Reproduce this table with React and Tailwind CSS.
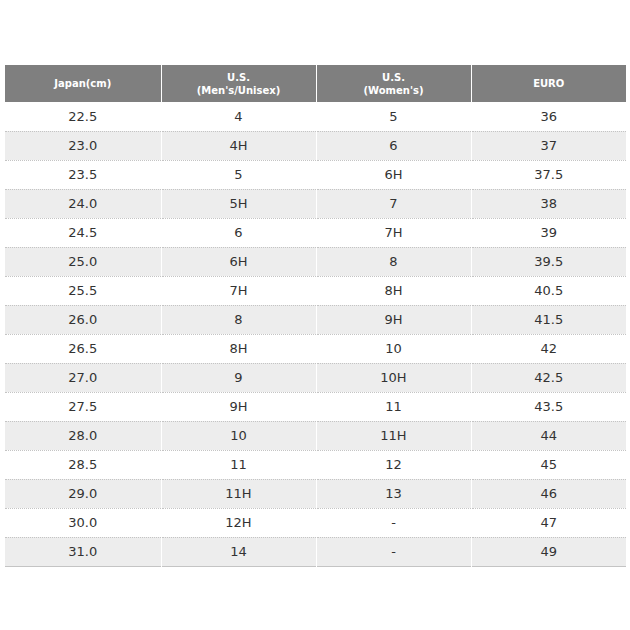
const rows = [
  ["22.5", "4", "5", "36"],
  ["23.0", "4H", "6", "37"],
  ["23.5", "5", "6H", "37.5"],
  ["24.0", "5H", "7", "38"],
  ["24.5", "6", "7H", "39"],
  ["25.0", "6H", "8", "39.5"],
  ["25.5", "7H", "8H", "40.5"],
  ["26.0", "8", "9H", "41.5"],
  ["26.5", "8H", "10", "42"],
  ["27.0", "9", "10H", "42.5"],
  ["27.5", "9H", "11", "43.5"],
  ["28.0", "10", "11H", "44"],
  ["28.5", "11", "12", "45"],
  ["29.0", "11H", "13", "46"],
  ["30.0", "12H", "-", "47"],
  ["31.0", "14", "-", "49"],
];

const headers = [
  ["Japan(cm)"],
  ["U.S.", "(Men's/Unisex)"],
  ["U.S.", "(Women's)"],
  ["EURO"],
];

export default function App() {
  return (
    <div className="min-h-[630px] w-[630px] bg-white pl-[5px] pt-[65px] font-['DejaVu_Sans',sans-serif]">
      <table className="w-[621px] table-fixed border-collapse">
        <colgroup>
          <col className="w-[156px]" />
          <col className="w-[155px]" />
          <col className="w-[155px]" />
          <col className="w-[155px]" />
        </colgroup>
        <thead>
          <tr className="h-[37px] bg-[#7f7f7f]">
            {headers.map((h, i) => (
              <th
                key={i}
                className={`p-0 text-center text-[10px] font-bold leading-[13px] text-white ${
                  i > 0 ? "border-l border-white" : ""
                }`}
              >
                {h.map((line) => (
                  <div key={line}>{line}</div>
                ))}
              </th>
            ))}
          </tr>
        </thead>
        <tbody>
          {rows.map((r, ri) => (
            <tr
              key={ri}
              className={`h-[29px] border-b border-dotted border-[#c4c4c4] ${
                ri % 2 === 1 ? "bg-[#ededed]" : "bg-white"
              } ${ri === rows.length - 1 ? "border-solid" : ""}`}
            >
              {r.map((c, ci) => (
                <td
                  key={ci}
                  className={`p-0 text-center text-[13px] text-[#333] ${
                    ci > 0 ? "border-l border-white" : ""
                  }`}
                >
                  {c}
                </td>
              ))}
            </tr>
          ))}
        </tbody>
      </table>
    </div>
  );
}
